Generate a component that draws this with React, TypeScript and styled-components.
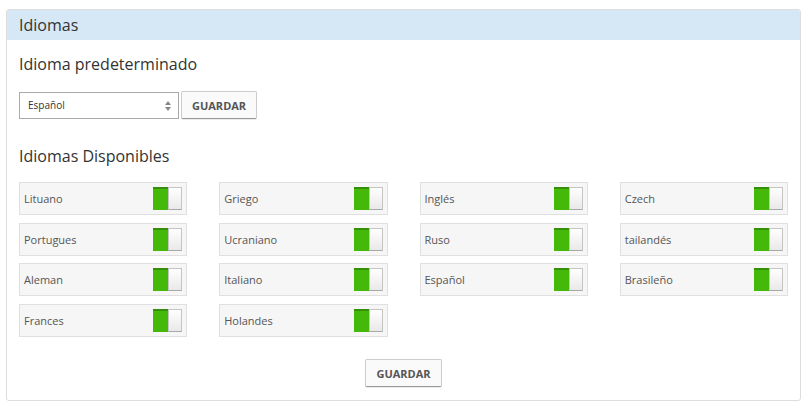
import { createGlobalStyle, styled } from 'styled-components'

const GlobalStyle = createGlobalStyle`
  body {
    margin: 0;
    background: #ffffff;
    font-family: 'Open Sans', 'Liberation Sans', sans-serif;
    color: #333333;
  }
`

const languages = [
  'Lituano', 'Griego', 'Inglés', 'Czech',
  'Portugues', 'Ucraniano', 'Ruso', 'tailandés',
  'Aleman', 'Italiano', 'Español', 'Brasileño',
  'Frances', 'Holandes',
]

const Page = styled.div`
  padding: 9px 6px 8px 6px;
`

const Panel = styled.section`
  width: 795px;
  box-sizing: border-box;
  border: 1px solid #dddddd;
  border-radius: 3px;
  background: #ffffff;
  overflow: hidden;
`

const PanelHeading = styled.header`
  height: 30px;
  display: flex;
  align-items: center;
  padding: 0 12px;
  background: #d6e8f6;
  font-size: 16px;
  color: #333333;
`

const PanelBody = styled.div`
  padding: 12px 12px 13px 12px;
  display: flex;
  flex-direction: column;
`

const SectionTitle = styled.h3<{ $top: number }>`
  margin: ${({ $top }) => $top}px 0 0 0;
  font-size: 16px;
  font-weight: 400;
  line-height: 24px;
  color: #333333;
`

const FormRow = styled.div`
  display: flex;
  align-items: center;
  gap: 2px;
  margin-top: 15px;
`

const SelectBox = styled.div`
  position: relative;
  width: 160px;
  height: 27px;
  box-sizing: border-box;
  border: 1px solid #aaaaaa;
  display: flex;
  align-items: center;
  padding-left: 8px;
  font-size: 10px;
  color: #333333;
  background: #ffffff;
`

const Arrows = styled.svg`
  position: absolute;
  right: 7px;
  top: 8px;
`

const Button = styled.button`
  height: 28px;
  box-sizing: border-box;
  padding: 0 10px;
  border: 1px solid #cccccc;
  border-bottom-color: #999999;
  border-radius: 2px;
  background: #fafafa;
  font-family: 'Open Sans', 'Liberation Sans', sans-serif;
  font-size: 11px;
  font-weight: 700;
  color: #555555;
  box-shadow: 0 1px 0 rgba(0, 0, 0, 0.08);
`

const Grid = styled.div`
  margin-top: 14px;
  display: grid;
  grid-template-columns: repeat(4, 1fr);
  column-gap: 32px;
  row-gap: 7.7px;
`

const LangItem = styled.div`
  height: 33px;
  box-sizing: border-box;
  border: 1px solid #e0e0e0;
  background: #f6f6f6;
  display: flex;
  align-items: center;
  justify-content: space-between;
  padding: 0 4px 0 4px;
  font-size: 11px;
  color: #555555;
`

const Toggle = styled.div`
  display: flex;
  width: 29px;
  height: 23px;
`

const ToggleOn = styled.div`
  width: 15px;
  height: 23px;
  box-sizing: border-box;
  background: #45b90a;
  border-top: 2px solid #359008;
`

const ToggleKnob = styled.div`
  width: 14px;
  height: 23px;
  box-sizing: border-box;
  border: 1px solid #c4c4c4;
  border-bottom-color: #a8a8a8;
  background: linear-gradient(#ffffff, #e9e9e9);
`

const Footer = styled.div`
  display: flex;
  justify-content: center;
  margin-top: 22px;
`

export default function App() {
  return (
    <>
      <GlobalStyle />
      <Page>
        <Panel>
          <PanelHeading>Idiomas</PanelHeading>
          <PanelBody>
            <SectionTitle $top={0}>Idioma predeterminado</SectionTitle>
            <FormRow>
              <SelectBox>
                Español
                <Arrows width="6" height="10" viewBox="0 0 6 10">
                  <path d="M3 0 L6 4 L0 4 Z" fill="#888" />
                  <path d="M3 10 L6 6 L0 6 Z" fill="#888" />
                </Arrows>
              </SelectBox>
              <Button>GUARDAR</Button>
            </FormRow>
            <SectionTitle $top={25}>Idiomas Disponibles</SectionTitle>
            <Grid>
              {languages.map(name => (
                <LangItem key={name}>
                  {name}
                  <Toggle>
                    <ToggleOn />
                    <ToggleKnob />
                  </Toggle>
                </LangItem>
              ))}
            </Grid>
            <Footer>
              <Button>GUARDAR</Button>
            </Footer>
          </PanelBody>
        </Panel>
      </Page>
    </>
  )
}
